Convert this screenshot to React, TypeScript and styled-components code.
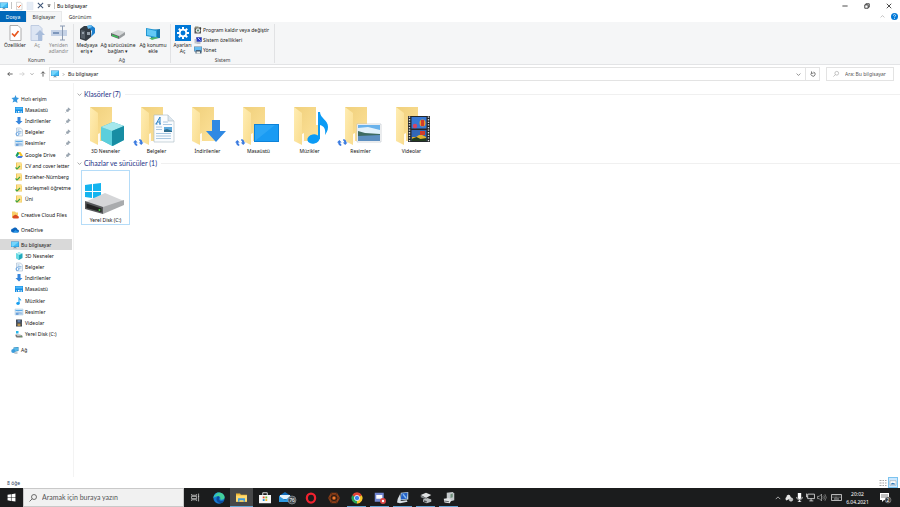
import React from "react";
import styled, { createGlobalStyle, css } from "styled-components";

const Global = createGlobalStyle`
  * { box-sizing: border-box; }
  html, body { margin: 0; padding: 0; }
  body { font: 5px/6px "Noto Sans", "Open Sans", sans-serif; color: #111; background: #fff; overflow: hidden; }
  button, input { font: inherit; color: inherit; border: 0; padding: 0; margin: 0; background: none; outline: none; }
  svg { display: block; flex: none; overflow: visible; }
`;

const Window = styled.div`
  height: 100vh;
  display: flex;
  flex-direction: column;
`;

/* ---------- title bar ---------- */
const TitleBar = styled.header`
  display: flex;
  align-items: center;
  height: 11px;
`;
const QuickAccess = styled.div`
  display: flex;
  align-items: center;
  gap: 3px;
  width: 55px;
`;
const QuickButton = styled.button<{ $faded?: boolean }>`
  opacity: ${(p) => (p.$faded ? 0.55 : 1)};
`;
const Rule = styled.span`
  width: 1px;
  height: 7px;
  background: #c4c4c4;
`;
const WindowTitle = styled.h1`
  margin: 0 auto 0 2px;
  font-size: 5px;
  font-weight: 400;
  color: #000;
`;
const WindowButton = styled.button`
  width: 22px;
  height: 11px;
  display: grid;
  place-items: center;
`;

/* ---------- ribbon ---------- */
const Tabs = styled.nav`
  display: flex;
  height: 11px;
`;
const Tab = styled.button<{ $kind?: "file" | "active" }>`
  min-width: ${(p) => (p.$kind === "file" ? 26 : 36)}px;
  color: #333;
  ${(p) => p.$kind === "file" && css`background: #0067b8; color: #fff;`}
  ${(p) => p.$kind === "active" && css`background: #f5f6f7; border: solid #e8e9ea; border-width: 1px 1px 0;`}
`;
const TabTools = styled.div`
  margin-left: auto;
  display: flex;
  align-items: center;
  gap: 6px;
  padding-right: 2px;
`;
const Ribbon = styled.section`
  display: flex;
  height: 43px;
  background: #f5f6f7;
  border-bottom: 1px solid #e3e4e6;
`;
const RibbonGroup = styled.div`
  display: flex;
  flex-direction: column;
  justify-content: space-between;
  margin: 2px 0 1px;
  border-right: 1px solid #e1e2e4;
`;
const GroupBody = styled.div`
  display: flex;
  padding: 1px 1px 0;
`;
const GroupLabel = styled.div`
  text-align: center;
  color: #444;
`;
const BigButton = styled.button<{ $w: number; $off?: boolean }>`
  width: ${(p) => p.$w}px;
  display: flex;
  flex-direction: column;
  align-items: center;
  gap: 1px;
  color: ${(p) => (p.$off ? "#888" : "#222")};
  white-space: nowrap;
`;
const SmallList = styled.div`
  display: flex;
  flex-direction: column;
  padding: 0 4px 0 1px;
`;
const SmallButton = styled.button`
  display: flex;
  align-items: center;
  gap: 1px;
  height: 10px;
  color: #222;
  white-space: nowrap;
`;

/* ---------- address row ---------- */
const AddressRow = styled.div`
  display: flex;
  align-items: center;
  height: 18px;
  padding: 0 6px 0 4px;
`;
const NavButtons = styled.div`
  display: flex;
  width: 45px;
  justify-content: space-around;
  align-items: center;
`;
const AddressBox = styled.div`
  flex: 1;
  display: flex;
  align-items: center;
  height: 14px;
  border: 1px solid #e3e3e3;
`;
const Crumb = styled.button`
  display: flex;
  align-items: center;
  gap: 3px;
  padding-left: 1px;
  margin-right: auto;
`;
const BoxButton = styled.button<{ $line?: boolean }>`
  width: 14px;
  height: 12px;
  display: grid;
  place-items: center;
  border-left: ${(p) => (p.$line ? "1px solid #e3e3e3" : "0")};
`;
const SearchField = styled.label`
  display: flex;
  align-items: center;
  gap: 6px;
  width: 68px;
  height: 14px;
  margin-left: 6px;
  padding-left: 6px;
  border: 1px solid #e3e3e3;
`;
const TextInput = styled.input`
  flex: 1;
  min-width: 0;
  &::placeholder { color: #555; opacity: 1; }
`;

/* ---------- body ---------- */
const Main = styled.div`
  flex: 1;
  display: flex;
  min-height: 0;
`;
const Sidebar = styled.aside`
  width: 74px;
  padding-top: 10px;
  border-right: 1px solid #f3f3f3;
  display: flex;
  flex-direction: column;
  gap: 4px;
`;
const TreeGroup = styled.div<{ $h?: number }>`
  display: grid;
  grid-auto-rows: 1fr;
  height: ${(p) => p.$h ?? 11}px;
  width: 72px;
`;
const TreeItem = styled.button<{ $child?: boolean; $selected?: boolean }>`
  display: flex;
  align-items: center;
  gap: 2px;
  min-width: 0;
  overflow: hidden;
  text-align: left;
  white-space: nowrap;
  padding-left: ${(p) => (p.$child ? 15 : 11)}px;
  background: ${(p) => (p.$selected ? "#d9d9d9" : "transparent")};
`;
const TreeLabel = styled.span`
  flex: 1;
`;
const PinSlot = styled.span`
  padding-right: 1px;
`;
const Files = styled.main`
  flex: 1;
  padding: 5px 0 0 3px;
`;
const SectionTitle = styled.h2`
  display: flex;
  align-items: center;
  gap: 2px;
  margin: 0;
  height: 12px;
  font: 400 7px/8px Lato, "Noto Sans", sans-serif;
  color: #1e3287;
  white-space: nowrap;
  &::after { content: ""; flex: 1; margin-left: 2px; height: 1px; background: #f0f0f0; }
`;
const Tiles = styled.div`
  display: flex;
  flex-wrap: wrap;
  gap: 2px;
  padding: 1px 0 1px 4px;
`;
const Tile = styled.button<{ $focused?: boolean }>`
  width: 49px;
  height: 55px;
  display: flex;
  flex-direction: column;
  align-items: center;
  gap: 1px;
  padding-top: 2px;
  border: 1px solid ${(p) => (p.$focused ? "#b5dcf8" : "transparent")};
`;
const StatusBar = styled.footer`
  display: flex;
  justify-content: space-between;
  align-items: center;
  height: 11px;
  padding: 0 2px 0 7px;
  color: #1e395b;
`;
const ViewModes = styled.div`
  display: flex;
  align-items: center;
`;
const ViewButton = styled.button<{ $on?: boolean }>`
  width: 10px;
  height: 11px;
  display: grid;
  place-items: center;
  ${(p) => p.$on && css`background: #cce8ff; border: 1px solid #7cc3ee;`}
`;

/* ---------- taskbar ---------- */
const Taskbar = styled.nav`
  display: flex;
  height: 19px;
  background: #1b1c1d;
  color: #fff;
`;
const TaskButton = styled.button<{ $open?: boolean; $active?: boolean }>`
  width: 23px;
  height: 19px;
  display: grid;
  place-items: center;
  background-color: ${(p) => (p.$active ? "#474849" : "transparent")};
  ${(p) => p.$open && css`
    background-image: linear-gradient(#65a5d4, #65a5d4);
    background-size: ${p.$active ? 23 : 19}px 1px;
    background-repeat: no-repeat;
    background-position: center bottom;
  `}
`;
const TaskSearch = styled.label`
  display: flex;
  align-items: center;
  gap: 5px;
  width: 161px;
  padding-left: 5px;
  background: #f1f1f1;
  border: 1px solid #c9c9c9;
  color: #444;
  font: 7px/9px Lato, "Noto Sans", sans-serif;
`;
const Tray = styled.div`
  margin-left: auto;
  display: flex;
  align-items: center;
`;
const TrayButton = styled.button<{ $w?: number }>`
  width: ${(p) => p.$w ?? 11}px;
  height: 19px;
  display: grid;
  place-items: center;
`;
const Clock = styled.time`
  width: 25px;
  text-align: center;
  line-height: 8px;
`;

/* ---------- drawings ---------- */
type P = { s?: number };
const Svg = ({ s = 8, vb = 16, children }: React.PropsWithChildren<{ s?: number; vb?: number }>) => (
  <svg width={s} height={s} viewBox={`0 0 ${vb} ${vb}`} fill="none" aria-hidden="true">{children}</svg>
);
const Line = ({ d, s = 6, c = "#555", w = 1.6 }: { d: string; s?: number; c?: string; w?: number }) => (
  <Svg s={s}><path d={d} stroke={c} strokeWidth={w} /></Svg>
);
const CHEVRON = "M2 5l6 6 6-6";

const Monitor = ({ s }: P) => (
  <Svg s={s}>
    <path d="M0 1h16v11H0z" fill="#2c8fd0" /><path d="M1 2h14v9H1z" fill="#42bdf5" />
    <path d="M1 2h14L4 11H1z" fill="#76d5fb" /><path d="M6 12h4v1.500h2v1H4v-1h2z" fill="#7f98a8" />
  </Svg>
);
const CheckDoc = ({ s }: P) => (
  <Svg s={s}>
    <path d="M3 .5h8l3 3v12H3z" fill="#fff" stroke="#9a9a9a" strokeWidth=".8" />
    <path d="M5 8.500l2.500 2.500 4-5" stroke="#e8551c" strokeWidth="1.700" />
  </Svg>
);
const OpenDoc = ({ s }: P) => (
  <Svg s={s}>
    <path d="M2 .5h8l3 3v12H2z" fill="#dce5f3" stroke="#b4c3dc" strokeWidth=".8" />
    <path d="M11 5l5 5h-3v6H9v-6H6z" fill="#a9bddb" />
  </Svg>
);
const BlankDoc = () => (
  <Svg><path d="M2 .5h12v15H2z" fill="#d3dff0" stroke="#bccbe2" /></Svg>
);
const RenameIcon = ({ s }: P) => (
  <Svg s={s}>
    <path d="M0 5h16v6H0z" fill="#c5d2e6" /><path d="M2 7h6v2H2z" fill="#7d96bb" />
    <path d="M9 1h5M11.500 1v14M9 15h5" stroke="#8a9ab3" />
  </Svg>
);
const MediaIcon = ({ s }: P) => (
  <Svg s={s}>
    <path d="M1 4l4-3h7v11l-5 4-6-2z" fill="#343d45" /><path d="M2 5l4 1v8l-4-1z" fill="#566069" />
    <path d="M8 1l4-1 4 3v5l-4 4 1-6z" fill="#1c80cf" /><path d="M8 1l4-1 1 2-4 2z" fill="#69bdf0" />
    <path d="M3 7h2v2H3zM8 7h3v3H8z" fill="#94a0aa" />
  </Svg>
);
const NetDrive = ({ s }: P) => (
  <Svg s={s}>
    <path d="M1 8l7-3 7 2-6 4z" fill="#d3d6d7" /><path d="M1 8l8 3v3l-8-3z" fill="#636768" />
    <path d="M9 11l6-4v3l-6 4z" fill="#989c9e" /><path d="M2 9.500l6 2v1.500l-6-2z" fill="#3ac258" />
  </Svg>
);
const NetPlace = ({ s }: P) => (
  <Svg s={s}>
    <path d="M6 5l9-1v9l-9 1z" fill="#1678af" /><path d="M1 3l11 2v8L1 11z" fill="#2297d3" />
    <path d="M2 4l9 2v6l-9-2z" fill="#64c9f5" /><path d="M4 13l8-1 1 1-6 2z" fill="#52b86b" />
  </Svg>
);
const Gear = () => (
  <Svg s={16}>
    <path d="M0 0h16v16H0z" fill="#0078d7" />
    <g stroke="#fff" strokeWidth="2">
      <path d="M8 2v12M2 8h12M3.800 3.800l8.400 8.400M12.200 3.800l-8.400 8.400" />
    </g>
    <circle cx="8" cy="8" r="3.300" fill="#0078d7" stroke="#fff" strokeWidth="1.700" />
  </Svg>
);
const Programs = () => (
  <Svg>
    <path d="M1 3h13v12H1z" fill="#555" /><path d="M2 1h7v4H2z" fill="#8b8b77" />
    <circle cx="8" cy="9" r="4.500" fill="#e5eaeb" /><circle cx="8" cy="9" r="2" fill="#50855e" />
    <path d="M11 2l4 2-2 3z" fill="#333" />
  </Svg>
);
const SystemProps = () => (
  <Svg>
    <path d="M4 2h12v10H4z" fill="#8e9fb5" /><path d="M5 3h10v8H5z" fill="#2434c5" />
    <path d="M8 4l5 5" stroke="#b7c8ff" strokeWidth="2" /><path d="M1 6h4v9H1z" fill="#c0c5ca" /><path d="M5 13h8v2H5z" fill="#8d969f" />
  </Svg>
);
const Manage = () => (
  <Svg>
    <path d="M0 1h16v10H0z" fill="#5d7e99" /><path d="M1 2h14v8H1z" fill="#67bdf0" />
    <path d="M4 8h9l2 3v4H3v-4z" fill="#46617a" /><path d="M5 11h7v4H5z" fill="#f0eee5" />
  </Svg>
);
const Star = () => (
  <Svg><path d="M9 0l2 5 5 1-4 4 1 6-5-3-5 2 2-5-4-4 6-1z" fill="#3697df" /></Svg>
);
const DownArrow = () => <Svg><path d="M5 0h6v8h4l-7 7-7-7h4z" fill="#3585dc" /></Svg>;
const DesktopIcon = () => (
  <Svg>
    <path d="M0 2h16v12H0z" fill="#168fe5" /><path d="M1 3h14v4H1z" fill="#53b9f7" />
    <path d="M2 11h2v2H2zm4-1h3v3H6zm5 1h3v2h-3z" fill="#fff" />
  </Svg>
);
const DocIcon = () => (
  <Svg>
    <path d="M3 0h8l4 4v12H3z" fill="#f4f9fd" stroke="#91a9c2" />
    <path d="M5 4h4M5 7h8M8 10h5" stroke="#6a9fd4" strokeWidth="1.300" />
    <circle cx="5" cy="12" r="3" stroke="#3f8cdc" strokeWidth="1.400" />
  </Svg>
);
const PictureIcon = () => (
  <Svg>
    <path d="M0 2h16v12H0z" fill="#d8ebf9" stroke="#96b6d1" strokeWidth=".8" />
    <path d="M1 9l5-2 9 2v4H1z" fill="#a5c4e3" /><path d="M1 4h14v2H1z" fill="#5baae9" />
    <path d="M2 12h5" stroke="#2c78ce" strokeWidth="2" />
  </Svg>
);
const DriveLogo = () => (
  <Svg>
    <path d="M5 2h5L4 13 1 9z" fill="#159f61" /><path d="M6 2h5l5 8h-5z" fill="#f6c42c" />
    <path d="M6 10h10l-3 4H4z" fill="#4179df" />
  </Svg>
);
const TickFolder = () => (
  <Svg>
    <path d="M2 1h11v3h1v11H2z" fill="#ecc65c" /><path d="M4 2h9v12l-9-1z" fill="#ffe18a" />
    <path d="M1 11l3 3 6-6" stroke="#3ba443" strokeWidth="2.200" />
  </Svg>
);
const CloudFolder = () => (
  <Svg>
    <path d="M2 1h6l2 2h4v11H2z" fill="#f8cf69" />
    <path d="M6 15a3 3 0 010-6 4 4 0 017 1 2.500 2.500 0 01.500 5z" fill="#da4a22" />
  </Svg>
);
const OneDrive = () => (
  <Svg>
    <path d="M4 13a4 4 0 010-8 5 5 0 019 2 3 3 0 010 6z" fill="#0b64bd" /><path d="M4 13l5-5 6 4-1 1z" fill="#2897e8" />
  </Svg>
);
const Cube = () => (
  <Svg>
    <path d="M2 3l6-2 7 2v9l-7 4-6-4z" fill="#22aabd" /><path d="M2 3l6 3v10l-6-4z" fill="#69dbe5" /><path d="M2 3l6-2 7 2-7 3z" fill="#b1f1f3" />
  </Svg>
);
const Note = () => (
  <Svg>
    <path d="M8 0c0 3 6 4 4 9 0-3-2-3-3-4v8H7V0z" fill="#149df0" /><ellipse cx="6" cy="13" rx="3.500" ry="2.800" fill="#149df0" />
  </Svg>
);
const Film = () => (
  <Svg>
    <path d="M2 1h12v14H2z" fill="#343b45" /><path d="M5 2h6v5H5z" fill="#6582ac" /><path d="M5 9h6v5H5z" fill="#b79350" />
    <path d="M3.500 1v14M12.500 1v14" stroke="#c6c9cc" strokeDasharray="1 1.500" />
  </Svg>
);
const DiskIcon = () => (
  <Svg>
    <path d="M2 2h5v5H2z" fill="#24b5ea" /><path d="M1 9l12 1 2 2v3H3l-2-3z" fill="#777" /><path d="M2 8l8 1 4 2-9 1z" fill="#cacccd" />
    <path d="M10 13h3" stroke="#4ecb46" />
  </Svg>
);
const Network = () => (
  <Svg>
    <path d="M5 3l10-1v8L5 12z" fill="#237eb2" /><path d="M6 4l8-1v6l-8 2z" fill="#58b9e9" />
    <circle cx="4.500" cy="10" r="4" fill="#3c9cdc" /><path d="M6 13h7v2H7z" fill="#8398a5" />
  </Svg>
);
const Pin = () => (
  <Svg s={6}><path d="M9 2l5 5-3 1-2 2-1 3-5-5 3-1 2-2zM5 11l-4 4" fill="#9aa5b1" stroke="#7b8896" strokeWidth="1.300" /></Svg>
);
const Magnifier = ({ s = 7, c = "#777" }: { s?: number; c?: string }) => (
  <Svg s={s}><circle cx="10" cy="6" r="5" stroke={c} strokeWidth="1.500" /><path d="M6.500 9.500L1 15" stroke={c} strokeWidth="1.500" /></Svg>
);

/* Large folder with an emblem in front */
const Sync = () => (
  <g fill="#3b7be0">
    <path d="M1 38.500L3.300 36l2.400 2.500H4.200q0 1.500 1.300 2.200L5 42q-3-.7-2.800-3.500z" />
    <path d="M11.500 38.500L9.200 41l-2.400-2.500h1.500q0-1.500-1.300-2.200L7.500 35q3 .7 2.800 3.500z" />
  </g>
);
const BigFolder = ({ sync, children }: React.PropsWithChildren<{ sync?: boolean }>) => (
  <svg width="49" height="43" viewBox="0 0 49 43" aria-hidden="true">
    <defs>
      <linearGradient id="flap" x1="0" y1="0" x2="1" y2="1"><stop stopColor="#ffedb3" /><stop offset="1" stopColor="#f9dc8e" /></linearGradient>
      <linearGradient id="back" x1="0" y1="0" x2="1" y2="1"><stop stopColor="#f0d07c" /><stop offset="1" stopColor="#fde29a" /></linearGradient>
    </defs>
    <path d="M9 3h22v18h2v16H11z" fill="url(#back)" />
    <path d="M15 31l4-2v9l-4 1z" fill="#fffaf0" />
    <path d="M9 3l8 6v32l-8-4z" fill="url(#flap)" />
    {sync && <Sync />}
    {children}
  </svg>
);
const EmblemCube = () => (
  <g>
    <path d="M20 23l12-5 11 4v14l-11 6-12-6z" fill="#3cb4c4" /><path d="M20 23l11 4v15l-11-6z" fill="#5ccfdc" />
    <path d="M20 23l12-5 11 4-12 5z" fill="#a5e8ec" /><path d="M31 27l12-5v14l-12 6z" fill="#188da3" />
  </g>
);
const EmblemDoc = () => (
  <g>
    <path d="M22 11h14l6 6v21H22z" fill="#fafcfe" stroke="#aab8c4" strokeWidth=".6" /><path d="M36 11v6h6" fill="#dde7ef" stroke="#aab8c4" strokeWidth=".6" />
    <path d="M24 20l4-7v7M25 18h3M23.500 20h2M27 20h2" stroke="#2a80c4" strokeWidth="1" fill="none" />
    <path d="M31 18h5M31 20.500h9M24 23h6M24 25.500h6M24 29.500h15M24 32h15M24 34.500h15" stroke="#9fc2df" strokeWidth=".9" />
    <path d="M32 23h8v5h-8z" fill="#5aa8dc" /><path d="M32 26l3-1 5 2v1h-8z" fill="#2f6d8d" />
  </g>
);
const EmblemArrow = () => <path d="M29 16h8v11h6L33 38 23 27h6z" fill="#2f89e3" />;
const EmblemScreen = () => (
  <g><path d="M20 20h25v18H20z" fill="#0d82d8" /><path d="M21 21h23v16H21z" fill="#1a9bf3" /><path d="M21 37V21h20z" fill="#38adf8" opacity=".6" /></g>
);
const EmblemNote = () => (
  <g fill="#0b9bf5"><path d="M33 8h2c0 6 8 8 8 15 0 4-2 6-3 8 1-6-1-9-5-10v14h-2z" /><ellipse cx="28.500" cy="35" rx="6.200" ry="4.600" transform="rotate(-12 28.500 35)" /></g>
);
const EmblemPhoto = () => (
  <g>
    <path d="M21 20h24v18H21z" fill="#fff" stroke="#b9c0c7" strokeWidth=".6" /><path d="M22 21h22v15.500H22z" fill="#6ab2eb" />
    <path d="M22 24l10-1 12 3v4H22z" fill="#e2f1fb" /><path d="M22 27l7 2 15 1v2H22z" fill="#3e6b62" /><path d="M22 32l22-1v6H22z" fill="#5d8fc0" />
  </g>
);
const EmblemFilm = () => (
  <g>
    <path d="M21 12h22v26H21z" fill="#24272b" /><path d="M24.500 13h15v11.500h-15z" fill="#3979d5" /><path d="M24.500 26h15v11h-15z" fill="#3267b5" />
    <path d="M22.500 12.500v25M41.500 12.500v25" stroke="#dfe2e4" strokeWidth="1.400" strokeDasharray="1.300 1.300" />
    <ellipse cx="35.500" cy="19" rx="3" ry="3.500" fill="#e99a2c" /><path d="M34 16h3v6h-3z" fill="#d33b2a" />
    <circle cx="28" cy="22" r="2.200" fill="#d64562" /><path d="M25 33h4l3-2h3l4 2v2H25z" fill="#e2b22f" /><path d="M33 27h5v4h-5z" fill="#d33b2a" />
    <path d="M24.500 35l5-2 4 2 6-1v3h-15z" fill="#243c1f" />
  </g>
);
const BigDisk = () => (
  <svg width="49" height="43" viewBox="0 0 49 43" aria-hidden="true">
    <path d="M4 12l7-1v7H4zM12 11l8-1v8h-8zM4 19h7v6l-7-1zM12 19h8v7l-8-1z" fill="#14b4ef" />
    <path d="M4 29l20-9 19 8-21 7z" fill="#d5d6d8" /><path d="M22 34l21-7v5l-21 9z" fill="#a9abad" />
    <path d="M4 28l18 6v7L4 36z" fill="#57595b" /><path d="M5.500 30.500l15 5v3.500l-15-4z" fill="#222" /><circle cx="18.500" cy="37" r="1" fill="#43d043" />
  </svg>
);

/* Taskbar drawings */
const WinLogo = () => <Svg s={9}><path d="M1 3l6-1v5.500H1zM8 2l7-1v6.500H8zM1 8.500h6V14l-6-1zM8 8.500h7V15l-7-1z" fill="#fff" /></Svg>;
const TaskView = () => <Svg s={9}><path d="M1 2v2h9V2M1 14v-2h9v2M1 6h9v4H1zM13.500 1v14M12.500 6h2" stroke="#ddd" strokeWidth="1.300" /></Svg>;
const Edge = () => (
  <Svg s={12}>
    <circle cx="8" cy="8" r="7.500" fill="#1477cf" /><path d="M.6 8C1 3 4 .5 8 .5s7.500 3 7.500 6.500c0 3-4 4-6 2.500 1-2 0-4-2.500-4S2 6 .6 8z" fill="#43cf9a" />
    <path d="M.6 8C1 3 4 .5 8 .5 5 2 2 5 .6 8z" fill="#22aade" /><path d="M6 6c-3 3-1 8 4 9 3 0 4-2 5-4-3 2-7 1-7-2 0-1 .5-1 .5-2S7 5.500 6 6z" fill="#0c4b9e" />
  </Svg>
);
const ExplorerIcon = () => (
  <Svg s={11}><path d="M0 2h6l1 2h9v10H0z" fill="#f2b936" /><path d="M0 5h16v9H0z" fill="#ffda70" /><path d="M3 9h10v5h-2v-2H5v2H3z" fill="#3c9bdc" /></Svg>
);
const Store = () => (
  <Svg s={12}>
    <path d="M5 4V1h6v3" stroke="#ddd" strokeWidth="1.300" /><path d="M0 4h16v11H0z" fill="#f7f7f7" />
    <path d="M5 6h2.500v2.500H5z" fill="#e64a2a" /><path d="M8.500 6H11v2.500H8.500z" fill="#72b82c" /><path d="M5 9.500h2.500V12H5z" fill="#2899e0" /><path d="M8.500 9.500H11V12H8.500z" fill="#f8b91d" />
  </Svg>
);
const Mail = () => (
  <svg width="17" height="12" viewBox="0 0 17 12" aria-hidden="true">
    <path d="M0 4l6-4 6 4v6H0z" fill="#126cb9" /><path d="M1 3h10v4H1z" fill="#e5f3fc" /><path d="M0 4l6 4 6-4v6H0z" fill="#2e9ae2" />
    <circle cx="13" cy="8" r="4" fill="#454b50" stroke="#a5a9ac" strokeWidth=".6" />
    <text x="13" y="10" fontSize="5" textAnchor="middle" fill="#fff">76</text>
  </svg>
);
const Opera = () => <Svg s={12}><ellipse cx="8" cy="8" rx="5.500" ry="6" stroke="#f0222f" strokeWidth="3" /></Svg>;
const Hexagon = () => (
  <Svg s={12}><path d="M4 1h8l4 7-4 7H4L0 8z" fill="#8a3d17" /><circle cx="8" cy="8" r="3.500" stroke="#2a1c15" strokeWidth="1.500" /><path d="M4 1l8 14M12 1L4 15M0 8h16" stroke="#4a2514" /><circle cx="8" cy="8" r="2" fill="#f07a2c" /></Svg>
);
const Chrome = () => (
  <Svg s={12}>
    <path d="M8 8L1.500 4.200A7.500 7.500 0 0114.500 4.200z" fill="#e24436" /><path d="M8 8l6.500-3.800A7.500 7.500 0 018 15.500z" fill="#f8c92d" />
    <path d="M8 8v7.500A7.500 7.500 0 011.500 4.200z" fill="#2ca455" /><circle cx="8" cy="8" r="3.500" fill="#3b82ec" stroke="#fff" />
  </Svg>
);
const Discord = () => (
  <Svg s={12}><path d="M1 1h12v12H1z" fill="#7187d2" /><path d="M3 4h8v5H3z" fill="#fff" /><circle cx="12" cy="12" r="4" fill="#dc4545" /><circle cx="12" cy="12" r="1.600" fill="#fff" /></Svg>
);
const Computer = () => (
  <Svg s={12}><path d="M5 1l10-1v10L4 11z" fill="#b7ccdd" /><path d="M6 2l8-1-1 8-8 1z" fill="#2260c5" /><path d="M1 9l3-6 1 9 8-1 1 2-10 2-4-1z" fill="#d7dee3" /><path d="M8 3l4 5" stroke="#80b7f3" strokeWidth="2" /></Svg>
);
const Device = () => (
  <Svg s={12}><path d="M1 4l7-3 7 3-7 4z" fill="#dfe1e2" /><path d="M1 4l7 4v2L1 7z" fill="#818588" /><path d="M4 10l6-2 5 2v3l-6 2-5-2z" fill="#b8bcbe" /><path d="M5 11l4 1v2l-4-1z" fill="#4b4f52" /></Svg>
);
const Server = () => (
  <Svg s={12}><path d="M5 1l8-1 2 2v9l-7 2-3-2z" fill="#c4c9cb" /><path d="M10 3l3-1v5l-3 1z" fill="#6f8f7a" /><path d="M1 9l7-1 3 3-2 4-7-1z" fill="#e1e4e5" /><path d="M2 12l6 1" stroke="#656a6d" strokeWidth="1.500" /></Svg>
);
const CloudTray = () => <Svg><path d="M3 13a4 4 0 010-7 4 4 0 018-1l1 3z" fill="#e6e6e6" /><circle cx="12" cy="11" r="3.500" fill="#bbb" stroke="#fff" /></Svg>;
const Mic = () => <Svg s={9}><path d="M5 0h6v8a3 3 0 01-6 0z" fill="#fff" /><path d="M3 7c0 7 10 7 10 0M8 12v4M5 15h6" stroke="#fff" strokeWidth="1.300" /></Svg>;
const Lan = () => <Svg s={9}><path d="M3 2h12v8H3zM9 10v4M6 14h7M1 1v6h2" stroke="#eee" strokeWidth="1.400" /></Svg>;
const Volume = () => <Svg s={9}><path d="M1 6h3l4-4v12l-4-4H1z" stroke="#ddd" /><path d="M10 6q2 2 0 4M12 4q3.500 4 0 8M14 2q5 6 0 12" stroke="#aaa" /></Svg>;
const Keyboard = () => <svg width="11" height="7" viewBox="0 0 22 14" fill="none" aria-hidden="true"><path d="M1 1h20v12H1z" stroke="#ddd" strokeWidth="1.600" /><path d="M3 4h16M3 7h16" stroke="#bbb" strokeWidth="1.300" strokeDasharray="1.500 1" /><path d="M6 10h10" stroke="#ddd" strokeWidth="1.500" /></svg>;
const Notice = () => (
  <svg width="12" height="12" viewBox="0 0 12 12" aria-hidden="true">
    <path d="M1 1h9v7H5L3 10V8H1z" fill="#fff" /><path d="M2 3h7M2 5h7" stroke="#333" strokeWidth=".6" />
    <circle cx="9" cy="8" r="3" fill="#3a3a3a" stroke="#aaa" strokeWidth=".5" /><text x="9" y="10" fontSize="5" textAnchor="middle" fill="#fff">2</text>
  </svg>
);

/* ---------- data ---------- */
type Entry = { label: string; icon: React.FC<P>; pin?: boolean };
const quick: Entry[] = [
  { label: "Masaüstü", icon: DesktopIcon, pin: true },
  { label: "İndirilenler", icon: DownArrow, pin: true },
  { label: "Belgeler", icon: DocIcon, pin: true },
  { label: "Resimler", icon: PictureIcon, pin: true },
  { label: "Google Drive", icon: DriveLogo, pin: true },
  { label: "CV and cover letter", icon: TickFolder },
  { label: "Erzieher-Nürnberg", icon: TickFolder },
  { label: "sözleşmeli öğretme", icon: TickFolder },
  { label: "Üni", icon: TickFolder },
];
const computer: Entry[] = [
  { label: "3D Nesneler", icon: Cube },
  { label: "Belgeler", icon: DocIcon },
  { label: "İndirilenler", icon: DownArrow },
  { label: "Masaüstü", icon: DesktopIcon },
  { label: "Müzikler", icon: Note },
  { label: "Resimler", icon: PictureIcon },
  { label: "Videolar", icon: Film },
  { label: "Yerel Disk (C:)", icon: DiskIcon },
];
const folders = [
  { label: "3D Nesneler", emblem: <EmblemCube /> },
  { label: "Belgeler", emblem: <EmblemDoc />, sync: true },
  { label: "İndirilenler", emblem: <EmblemArrow /> },
  { label: "Masaüstü", emblem: <EmblemScreen />, sync: true },
  { label: "Müzikler", emblem: <EmblemNote /> },
  { label: "Resimler", emblem: <EmblemPhoto />, sync: true },
  { label: "Videolar", emblem: <EmblemFilm /> },
];
const apps = [
  { name: "Görev Görünümü", icon: <TaskView /> },
  { name: "Edge", icon: <Edge /> },
  { name: "Dosya Gezgini", icon: <ExplorerIcon />, open: true, active: true },
  { name: "Store", icon: <Store /> },
  { name: "Posta", icon: <Mail /> },
  { name: "Opera", icon: <Opera /> },
  { name: "Oyun", icon: <Hexagon /> },
  { name: "Chrome", icon: <Chrome />, open: true },
  { name: "Discord", icon: <Discord />, open: true },
  { name: "Bilgisayar", icon: <Computer />, open: true },
  { name: "Aygıt", icon: <Device />, open: true },
  { name: "Sunucu", icon: <Server />, open: true },
];

const Node = ({ label, icon: Icon, pin, child, selected }: Entry & { child?: boolean; selected?: boolean }) => (
  <TreeItem $child={child} $selected={selected}>
    <Icon />
    <TreeLabel>{label}</TreeLabel>
    {pin && <PinSlot><Pin /></PinSlot>}
  </TreeItem>
);

export default function App() {
  return (
    <Window>
      <Global />
      <TitleBar>
        <QuickAccess>
          <Monitor />
          <Rule />
          <QuickButton aria-label="Özellikler"><CheckDoc /></QuickButton>
          <QuickButton $faded aria-label="Yeni"><BlankDoc /></QuickButton>
          <QuickButton aria-label="Sil"><Line s={7} c="#3d5476" w={2.4} d="M2 2l12 12M14 2L2 14" /></QuickButton>
          <QuickButton aria-label="Özelleştir"><Svg s={4}><path d="M2 1h12v2H2zM2 6h12l-6 7z" fill="#333" /></Svg></QuickButton>
          <Rule />
        </QuickAccess>
        <WindowTitle>Bu bilgisayar</WindowTitle>
        <WindowButton aria-label="Küçült"><Line d="M1 8h14" c="#111" w={2} /></WindowButton>
        <WindowButton aria-label="Geri yükle"><Line d="M2 5h9v9H2zM5 5V2h9v9h-3" c="#111" w={2} /></WindowButton>
        <WindowButton aria-label="Kapat"><Line d="M2 2l12 12M14 2L2 14" c="#111" w={2} /></WindowButton>
      </TitleBar>
      <Tabs>
        <Tab $kind="file">Dosya</Tab>
        <Tab $kind="active">Bilgisayar</Tab>
        <Tab>Görünüm</Tab>
        <TabTools>
          <Line s={5} c="#888" d="M2 11l6-6 6 6" />
          <Svg s={7}><circle cx="8" cy="8" r="8" fill="#0078d7" /><path d="M5.500 6c0-4 5-3 5-.5C10.500 7 8 7.500 8 10M8 11.500v2" stroke="#fff" strokeWidth="1.600" /></Svg>
        </TabTools>
      </Tabs>
      <Ribbon>
        <RibbonGroup>
          <GroupBody>
            <BigButton $w={28}><CheckDoc s={16} /><span>Özellikler</span></BigButton>
            <BigButton $w={16} $off><OpenDoc s={16} /><span>Aç</span></BigButton>
            <BigButton $w={27} $off><RenameIcon s={16} /><span>Yeniden<br />adlandır</span></BigButton>
          </GroupBody>
          <GroupLabel>Konum</GroupLabel>
        </RibbonGroup>
        <RibbonGroup>
          <GroupBody>
            <BigButton $w={24}><MediaIcon s={16} /><span>Medyaya<br />eriş ▾</span></BigButton>
            <BigButton $w={38}><NetDrive s={16} /><span>Ağ sürücüsüne<br />bağlan ▾</span></BigButton>
            <BigButton $w={32}><NetPlace s={16} /><span>Ağ konumu<br />ekle</span></BigButton>
          </GroupBody>
          <GroupLabel>Ağ</GroupLabel>
        </RibbonGroup>
        <RibbonGroup>
          <GroupBody>
            <BigButton $w={21}><Gear /><span>Ayarları<br />Aç</span></BigButton>
            <SmallList>
              <SmallButton><Programs />Program kaldır veya değiştir</SmallButton>
              <SmallButton><SystemProps />Sistem özellikleri</SmallButton>
              <SmallButton><Manage />Yönet</SmallButton>
            </SmallList>
          </GroupBody>
          <GroupLabel>Sistem</GroupLabel>
        </RibbonGroup>
      </Ribbon>
      <AddressRow>
        <NavButtons>
          <button aria-label="Geri"><Line c="#333" w={2} d="M15 8H2M7 3L2 8l5 5" /></button>
          <button aria-label="İleri"><Line c="#bbb" d="M1 8h13M9 3l5 5-5 5" /></button>
          <button aria-label="Son konumlar"><Line s={4} d={CHEVRON} w={2} /></button>
          <button aria-label="Yukarı"><Line c="#333" w={2} d="M8 15V2M3 7l5-5 5 5" /></button>
        </NavButtons>
        <AddressBox>
          <Crumb><Monitor /><Line s={3} w={3} d="M5 2l6 6-6 6" />Bu bilgisayar</Crumb>
          <BoxButton aria-label="Adresler"><Line s={5} w={2} d={CHEVRON} /></BoxButton>
          <BoxButton $line aria-label="Yenile"><Line w={2} d="M9 3a5.500 5.500 0 11-5 2M4 1v5h5" /></BoxButton>
        </AddressBox>
        <SearchField><Magnifier s={6} c="#999" /><TextInput aria-label="Ara" placeholder="Ara: Bu bilgisayar" /></SearchField>
      </AddressRow>
      <Main>
        <Sidebar>
          <TreeGroup $h={112}>
            <Node label="Hızlı erişim" icon={Star} />
            {quick.map((e) => <Node key={e.label} {...e} child />)}
          </TreeGroup>
          <TreeGroup><Node label="Creative Cloud Files" icon={CloudFolder} /></TreeGroup>
          <TreeGroup><Node label="OneDrive" icon={OneDrive} /></TreeGroup>
          <TreeGroup $h={101}>
            <Node label="Bu bilgisayar" icon={Monitor} selected />
            {computer.map((e) => <Node key={e.label} {...e} child />)}
          </TreeGroup>
          <TreeGroup><Node label="Ağ" icon={Network} /></TreeGroup>
        </Sidebar>
        <Files>
          <SectionTitle><Line s={5} w={2} c="#777" d={CHEVRON} />Klasörler (7)</SectionTitle>
          <Tiles>
            {folders.map((f) => (
              <Tile key={f.label}><BigFolder sync={f.sync}>{f.emblem}</BigFolder><span>{f.label}</span></Tile>
            ))}
          </Tiles>
          <SectionTitle><Line s={5} w={2} c="#777" d={CHEVRON} />Cihazlar ve sürücüler (1)</SectionTitle>
          <Tiles>
            <Tile $focused><BigDisk /><span>Yerel Disk (C:)</span></Tile>
          </Tiles>
        </Files>
      </Main>
      <StatusBar>
        <span>8 öğe</span>
        <ViewModes>
          <ViewButton aria-label="Ayrıntılar"><Svg><path d="M1 3h4M1 8h4M1 13h4M7 3h3M7 8h3M7 13h3M12 3h3M12 8h3M12 13h3" stroke="#888" strokeWidth="1.500" /></Svg></ViewButton>
          <ViewButton $on aria-label="Büyük simgeler"><Svg s={6}><path d="M0 2h16v12H0z" fill="#fff" stroke="#777" /><path d="M2 10l5-3 7 3v2H2z" fill="#2d78b7" /></Svg></ViewButton>
        </ViewModes>
      </StatusBar>
      <Taskbar>
        <TaskButton aria-label="Başlat"><WinLogo /></TaskButton>
        <TaskSearch><Magnifier s={8} c="#444" /><TextInput aria-label="Arama" placeholder="Aramak için buraya yazın" /></TaskSearch>
        {apps.map((a) => (
          <TaskButton key={a.name} aria-label={a.name} $open={a.open} $active={a.active}>{a.icon}</TaskButton>
        ))}
        <Tray>
          <TrayButton aria-label="Gizli simgeler"><Line c="#fff" d="M2 11l6-6 6 6" /></TrayButton>
          <TrayButton aria-label="Bulut"><CloudTray /></TrayButton>
          <TrayButton aria-label="Mikrofon"><Mic /></TrayButton>
          <TrayButton aria-label="Ağ"><Lan /></TrayButton>
          <TrayButton aria-label="Ses"><Volume /></TrayButton>
          <TrayButton $w={18} aria-label="Klavye"><Keyboard /></TrayButton>
          <Clock>20:02<br />6.04.2021</Clock>
          <TrayButton $w={30} aria-label="Bildirimler"><Notice /></TrayButton>
        </Tray>
      </Taskbar>
    </Window>
  );
}
